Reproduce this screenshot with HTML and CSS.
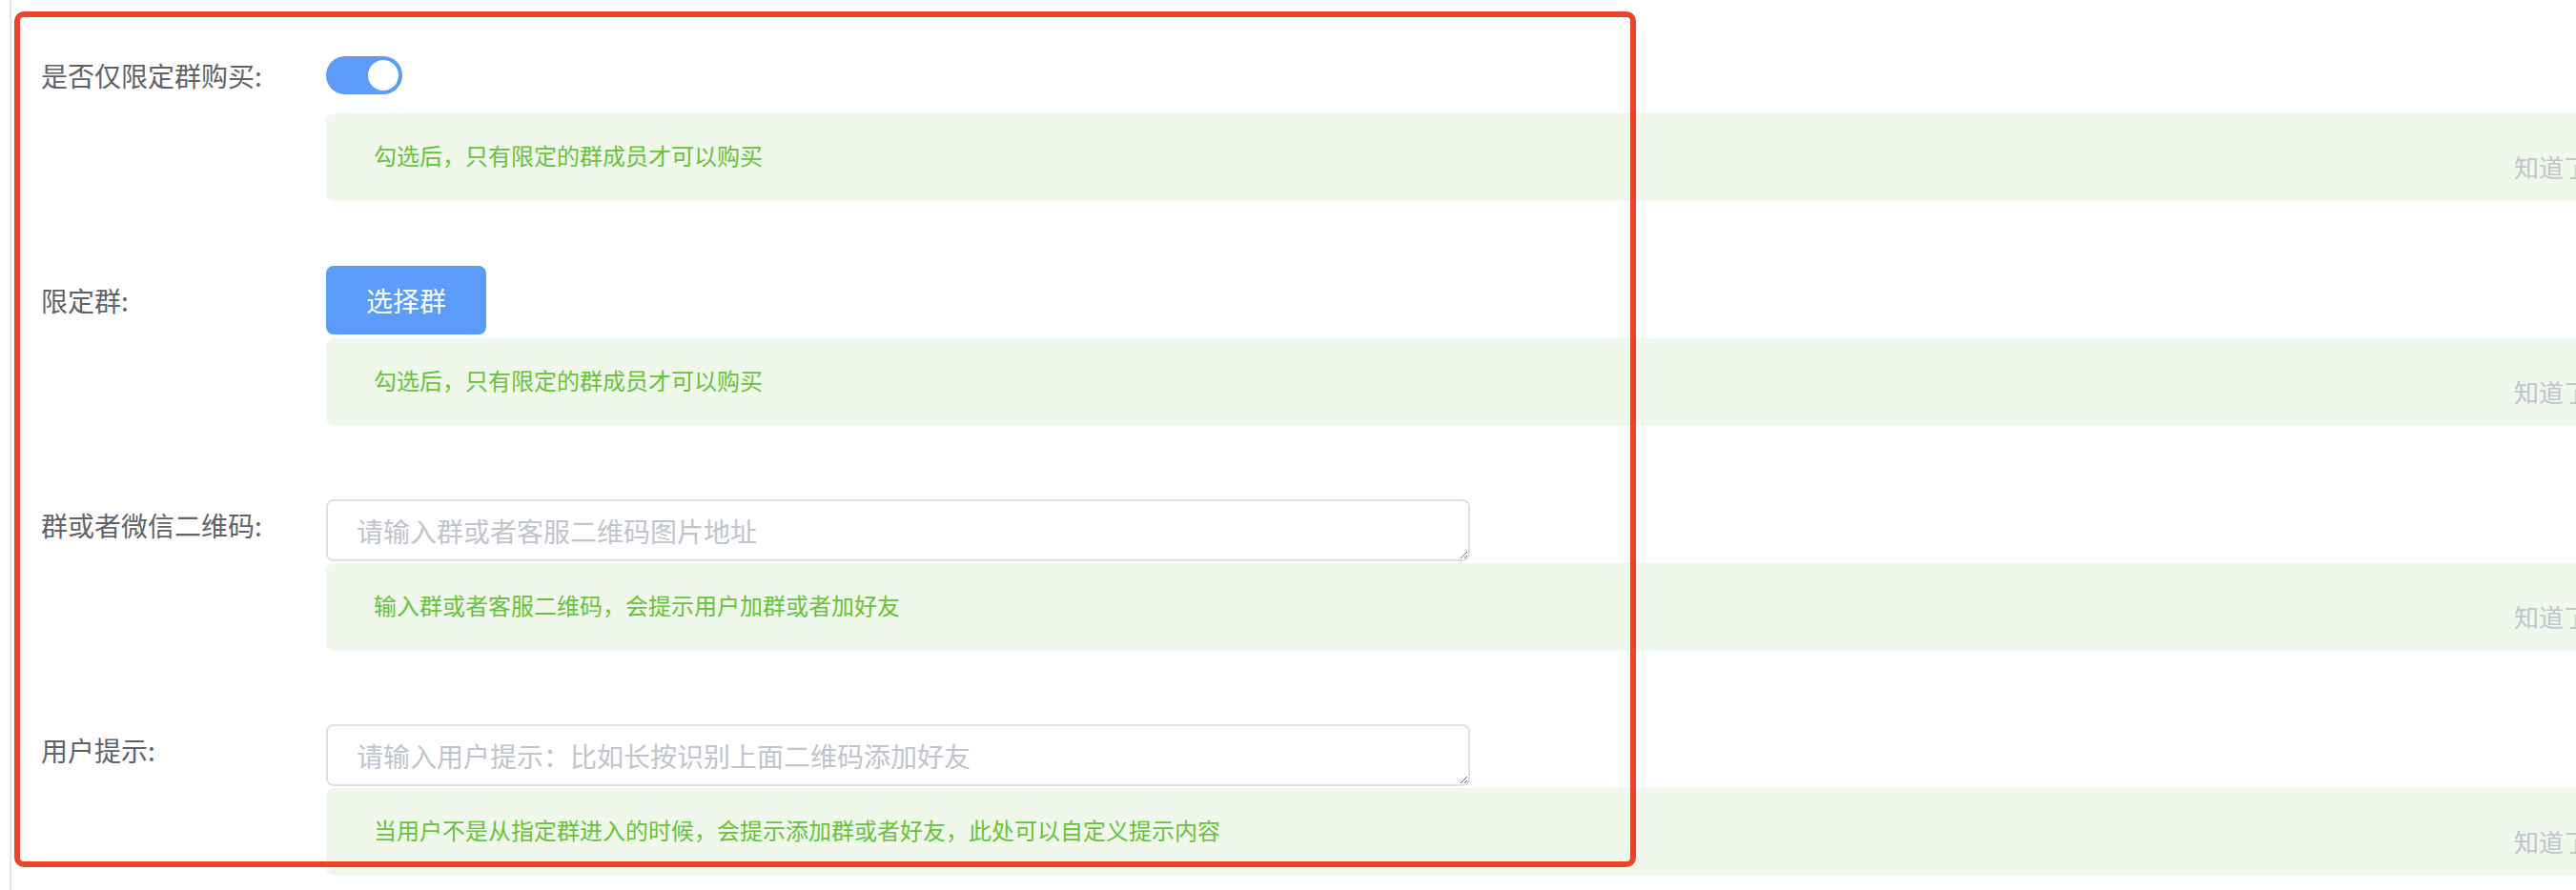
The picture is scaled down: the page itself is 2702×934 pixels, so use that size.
FILE: index.html
```html
<!DOCTYPE html>
<html lang="zh-CN">
<head>
<meta charset="utf-8">
<title>限定群设置</title>
<link rel="stylesheet" href="styles.css">
</head>
<body>
<div class="page">
  <div class="edge"></div>
  <form class="form">
    <div class="row">
      <div class="label">是否仅限定群购买:</div>
      <div class="content">
        <div class="control">
          <span class="switch"><span class="knob"></span></span>
        </div>
        <div class="alert">
          <span class="desc">勾选后，只有限定的群成员才可以购买</span>
          <span class="close">知道了</span>
        </div>
      </div>
    </div>
    <div class="row">
      <div class="label">限定群:</div>
      <div class="content">
        <div class="control">
          <button type="button" class="btn">选择群</button>
        </div>
        <div class="alert">
          <span class="desc">勾选后，只有限定的群成员才可以购买</span>
          <span class="close">知道了</span>
        </div>
      </div>
    </div>
    <div class="row">
      <div class="label">群或者微信二维码:</div>
      <div class="content">
        <div class="control control-bottom">
          <textarea class="textarea" rows="1" placeholder="请输入群或者客服二维码图片地址"></textarea>
        </div>
        <div class="alert">
          <span class="desc">输入群或者客服二维码，会提示用户加群或者加好友</span>
          <span class="close">知道了</span>
        </div>
      </div>
    </div>
    <div class="row">
      <div class="label">用户提示:</div>
      <div class="content">
        <div class="control control-bottom">
          <textarea class="textarea" rows="1" placeholder="请输入用户提示：比如长按识别上面二维码添加好友"></textarea>
        </div>
        <div class="alert">
          <span class="desc">当用户不是从指定群进入的时候，会提示添加群或者好友，此处可以自定义提示内容</span>
          <span class="close">知道了</span>
        </div>
      </div>
    </div>
  </form>
  <div class="highlight"></div>
</div>
</body>
</html>
```

FILE: styles.css
```css
html, body {
  margin: 0;
  padding: 0;
  overflow: hidden;
  background: #ffffff;
}

body {
  font-family: "Noto Sans CJK SC", "Noto Sans", sans-serif;
  color: #606266;
}

.page {
  position: relative;
  display: flex;
  width: 2702px;
  height: 934px;
  overflow: hidden;
}

.edge {
  flex: 0 0 10px;
  border-right: 2px solid #e6e6ea;
}

.form {
  flex: 0 0 auto;
  padding-top: 39px;
  margin: 0;
}

.row {
  display: flex;
  margin-bottom: 64px;
}

.label {
  flex: 0 0 299px;
  padding-left: 31px;
  font-size: 28px;
  line-height: 80px;
  color: #606266;
  white-space: nowrap;
}

.content {
  flex: 0 0 2403px;
}

.control {
  height: 80px;
  display: flex;
  align-items: center;
}

.control-bottom {
  align-items: flex-end;
  padding-bottom: 2px;
  box-sizing: border-box;
}

.switch {
  position: relative;
  display: block;
  width: 80px;
  height: 40px;
  border-radius: 20px;
  background: #5a9cf8;
}

.knob {
  position: absolute;
  top: 4px;
  right: 4px;
  width: 32px;
  height: 32px;
  border-radius: 50%;
  background: #ffffff;
}

.btn {
  width: 168px;
  height: 72px;
  padding: 0;
  border: none;
  border-radius: 8px;
  background: #5a9cf8;
  color: #ffffff;
  font-family: inherit;
  font-size: 28px;
  line-height: 72px;
}

.textarea {
  display: block;
  width: 1200px;
  height: 65px;
  box-sizing: border-box;
  padding: 10px 30px;
  border: 2px solid #dcdfe6;
  border-radius: 8px;
  font-family: inherit;
  font-size: 28px;
  line-height: 42px;
  color: #606266;
  resize: vertical;
  outline: none;
}

.textarea::placeholder {
  color: #c0c4cc;
}

.alert {
  position: relative;
  height: 92px;
  box-sizing: border-box;
  padding: 0 48px 4px 50px;
  display: flex;
  align-items: center;
  border-radius: 8px;
  background: #f0f8eb;
}

.desc {
  font-size: 24px;
  line-height: 36px;
  color: #67c23a;
}

.close {
  position: absolute;
  right: 30px;
  top: 42px;
  font-size: 26px;
  line-height: 28px;
  color: #c0c4cc;
}

.highlight {
  position: absolute;
  left: 15px;
  top: 12px;
  width: 1701px;
  height: 898px;
  box-sizing: border-box;
  border: 6px solid #e9432a;
  border-radius: 10px;
  pointer-events: none;
}
```
